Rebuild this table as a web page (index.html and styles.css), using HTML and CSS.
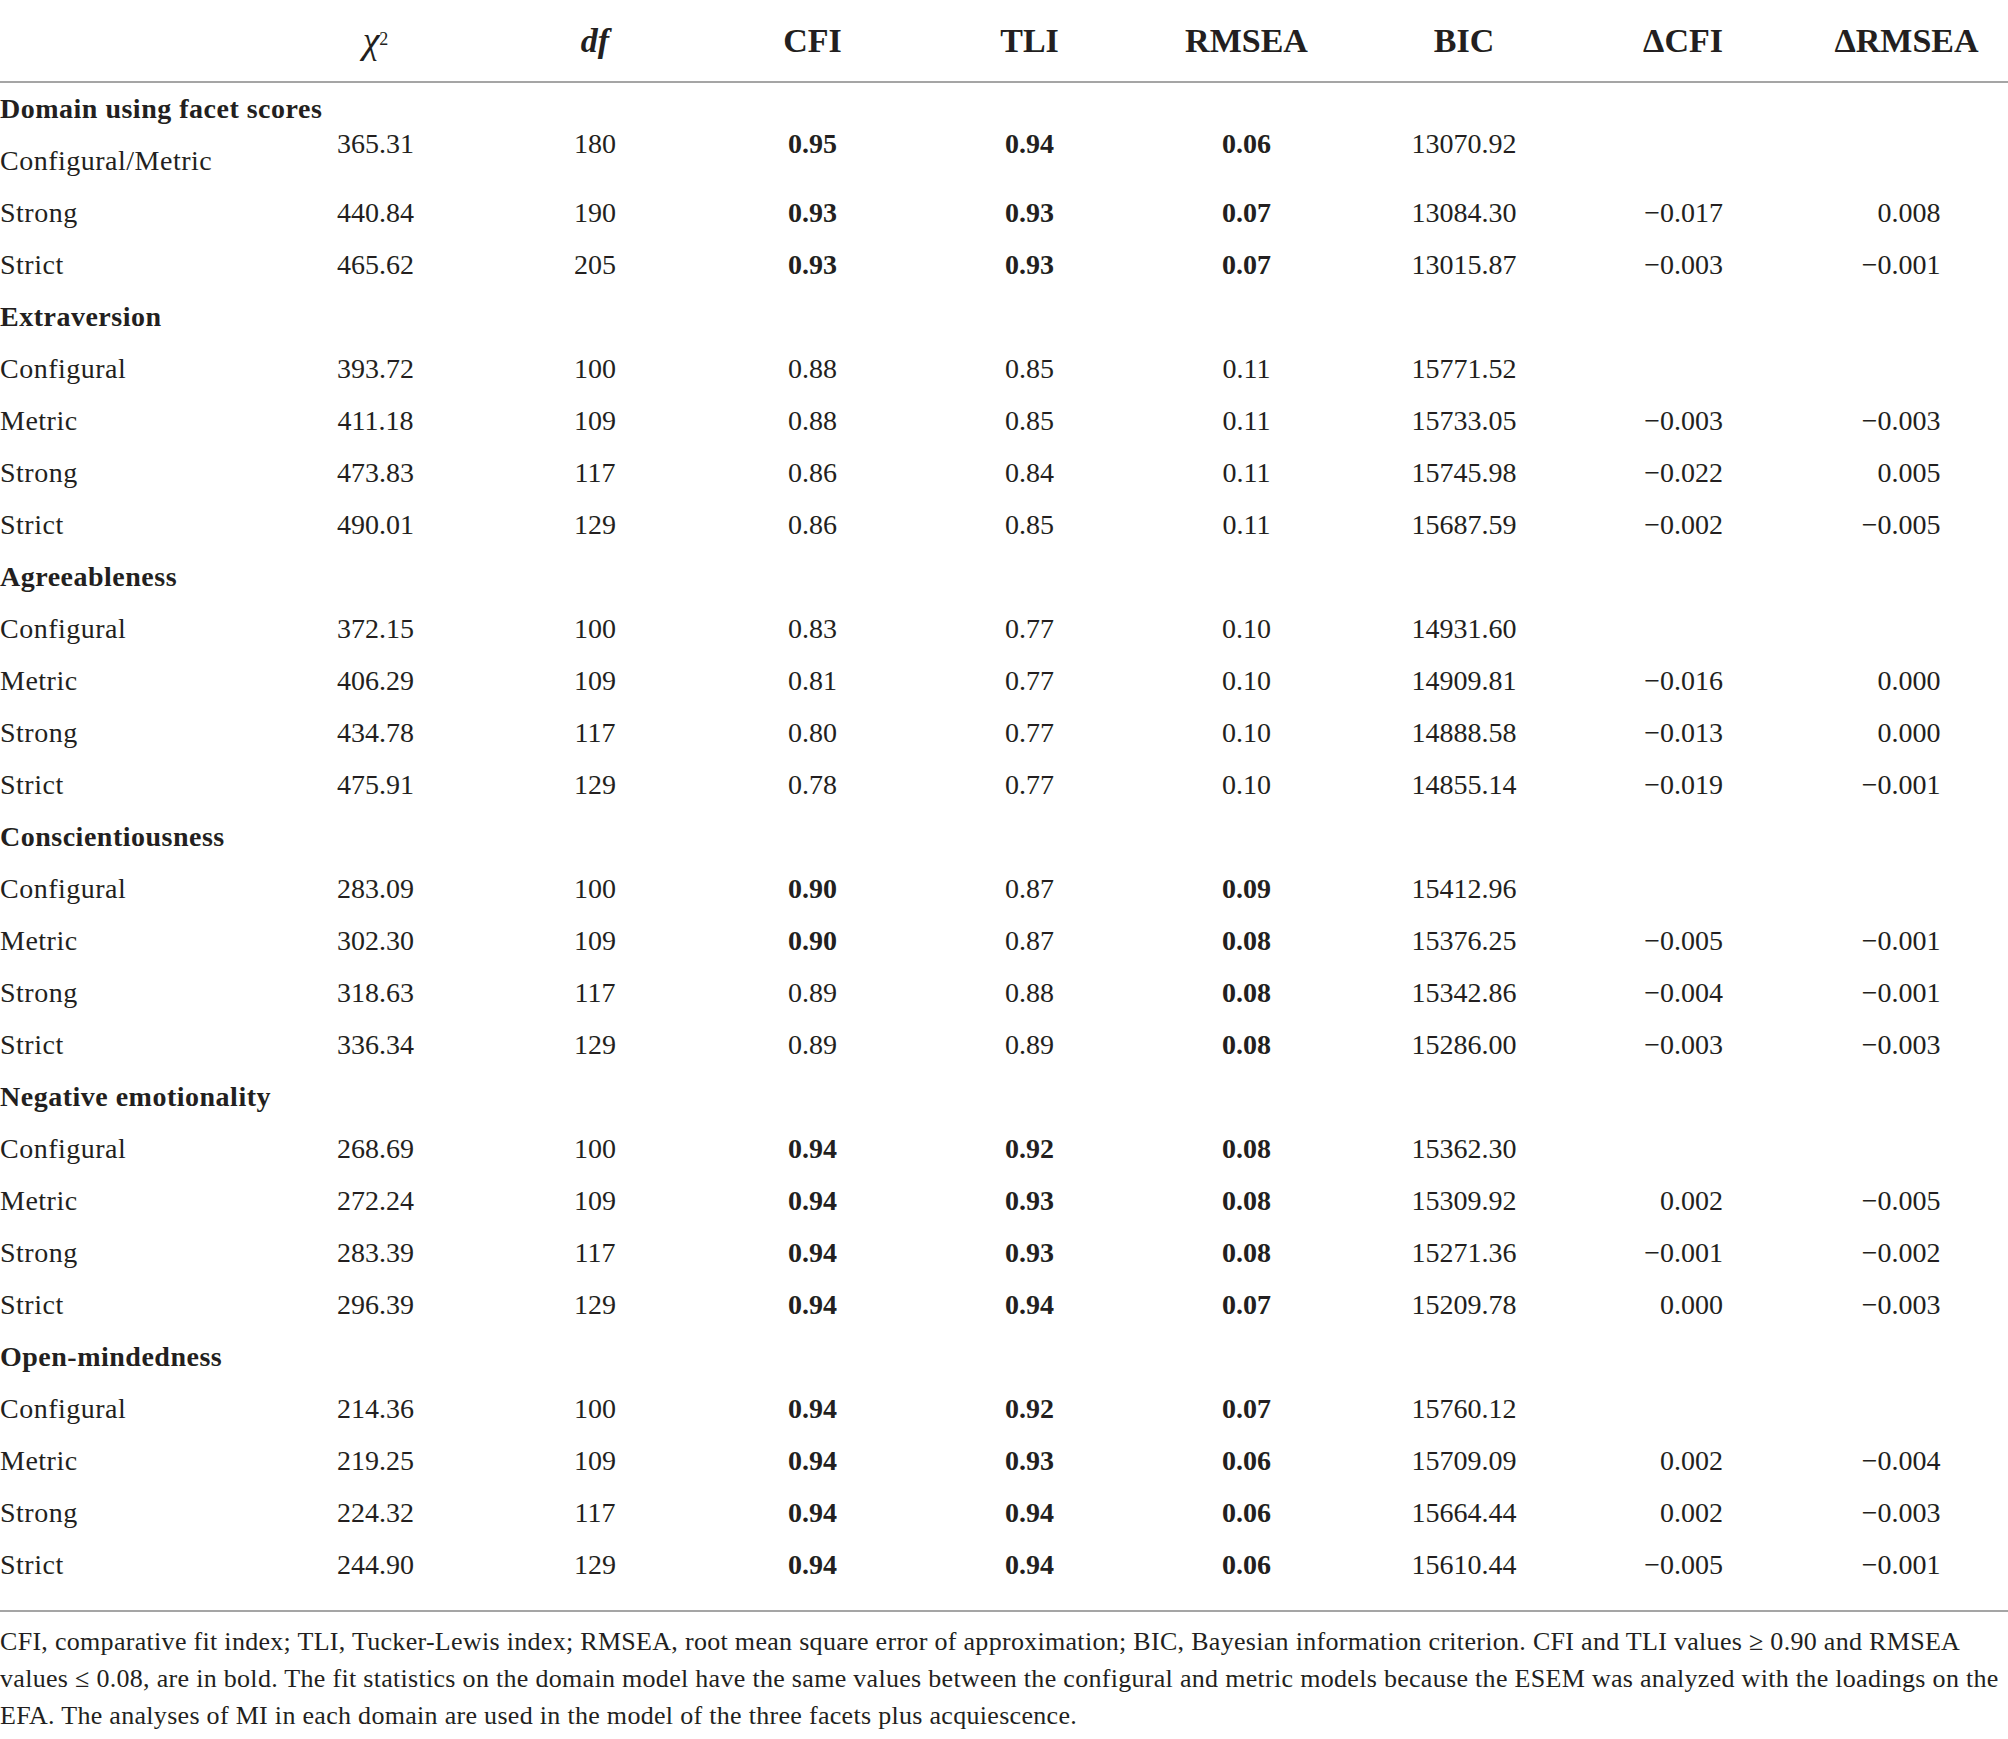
FILE: index.html
```html
<!DOCTYPE html>
<html lang="en">
<head>
<meta charset="utf-8">
<title>Measurement invariance fit statistics</title>
<link rel="stylesheet" href="styles.css">
</head>
<body>
<div class="table-wrap">
<table class="fit-table">
  <colgroup>
    <col class="c-label">
    <col class="c1"><col class="c2"><col class="c3"><col class="c4">
    <col class="c5"><col class="c6"><col class="c7"><col class="c8">
  </colgroup>
  <thead>
    <tr class="head-row">
      <th></th>
      <th><span class="chi">χ</span><sup class="sq">2</sup></th>
      <th><span class="it">df</span></th>
      <th>CFI</th>
      <th>TLI</th>
      <th>RMSEA</th>
      <th>BIC</th>
      <th>ΔCFI</th>
      <th class="last-head">ΔRMSEA</th>
    </tr>
  </thead>
  <tbody>
    <tr class="group"><td class="label" colspan="9">Domain using facet scores</td></tr>
    <tr class="first-data">
      <td class="label">Configural/Metric</td>
      <td class="raised">365.31</td><td class="raised">180</td><td class="raised b">0.95</td><td class="raised b">0.94</td><td class="raised b">0.06</td><td class="raised">13070.92</td><td class="raised"></td><td class="raised"></td>
    </tr>
    <tr><td class="label">Strong</td><td>440.84</td><td>190</td><td class="b">0.93</td><td class="b">0.93</td><td class="b">0.07</td><td>13084.30</td><td class="delta"><span>−0.017</span></td><td class="delta"><span>0.008</span></td></tr>
    <tr><td class="label">Strict</td><td>465.62</td><td>205</td><td class="b">0.93</td><td class="b">0.93</td><td class="b">0.07</td><td>13015.87</td><td class="delta"><span>−0.003</span></td><td class="delta"><span>−0.001</span></td></tr>

    <tr class="group"><td class="label" colspan="9">Extraversion</td></tr>
    <tr><td class="label">Configural</td><td>393.72</td><td>100</td><td>0.88</td><td>0.85</td><td>0.11</td><td>15771.52</td><td></td><td></td></tr>
    <tr><td class="label">Metric</td><td>411.18</td><td>109</td><td>0.88</td><td>0.85</td><td>0.11</td><td>15733.05</td><td class="delta"><span>−0.003</span></td><td class="delta"><span>−0.003</span></td></tr>
    <tr><td class="label">Strong</td><td>473.83</td><td>117</td><td>0.86</td><td>0.84</td><td>0.11</td><td>15745.98</td><td class="delta"><span>−0.022</span></td><td class="delta"><span>0.005</span></td></tr>
    <tr><td class="label">Strict</td><td>490.01</td><td>129</td><td>0.86</td><td>0.85</td><td>0.11</td><td>15687.59</td><td class="delta"><span>−0.002</span></td><td class="delta"><span>−0.005</span></td></tr>

    <tr class="group"><td class="label" colspan="9">Agreeableness</td></tr>
    <tr><td class="label">Configural</td><td>372.15</td><td>100</td><td>0.83</td><td>0.77</td><td>0.10</td><td>14931.60</td><td></td><td></td></tr>
    <tr><td class="label">Metric</td><td>406.29</td><td>109</td><td>0.81</td><td>0.77</td><td>0.10</td><td>14909.81</td><td class="delta"><span>−0.016</span></td><td class="delta"><span>0.000</span></td></tr>
    <tr><td class="label">Strong</td><td>434.78</td><td>117</td><td>0.80</td><td>0.77</td><td>0.10</td><td>14888.58</td><td class="delta"><span>−0.013</span></td><td class="delta"><span>0.000</span></td></tr>
    <tr><td class="label">Strict</td><td>475.91</td><td>129</td><td>0.78</td><td>0.77</td><td>0.10</td><td>14855.14</td><td class="delta"><span>−0.019</span></td><td class="delta"><span>−0.001</span></td></tr>

    <tr class="group"><td class="label" colspan="9">Conscientiousness</td></tr>
    <tr><td class="label">Configural</td><td>283.09</td><td>100</td><td class="b">0.90</td><td>0.87</td><td class="b">0.09</td><td>15412.96</td><td></td><td></td></tr>
    <tr><td class="label">Metric</td><td>302.30</td><td>109</td><td class="b">0.90</td><td>0.87</td><td class="b">0.08</td><td>15376.25</td><td class="delta"><span>−0.005</span></td><td class="delta"><span>−0.001</span></td></tr>
    <tr><td class="label">Strong</td><td>318.63</td><td>117</td><td>0.89</td><td>0.88</td><td class="b">0.08</td><td>15342.86</td><td class="delta"><span>−0.004</span></td><td class="delta"><span>−0.001</span></td></tr>
    <tr><td class="label">Strict</td><td>336.34</td><td>129</td><td>0.89</td><td>0.89</td><td class="b">0.08</td><td>15286.00</td><td class="delta"><span>−0.003</span></td><td class="delta"><span>−0.003</span></td></tr>

    <tr class="group"><td class="label" colspan="9">Negative emotionality</td></tr>
    <tr><td class="label">Configural</td><td>268.69</td><td>100</td><td class="b">0.94</td><td class="b">0.92</td><td class="b">0.08</td><td>15362.30</td><td></td><td></td></tr>
    <tr><td class="label">Metric</td><td>272.24</td><td>109</td><td class="b">0.94</td><td class="b">0.93</td><td class="b">0.08</td><td>15309.92</td><td class="delta"><span>0.002</span></td><td class="delta"><span>−0.005</span></td></tr>
    <tr><td class="label">Strong</td><td>283.39</td><td>117</td><td class="b">0.94</td><td class="b">0.93</td><td class="b">0.08</td><td>15271.36</td><td class="delta"><span>−0.001</span></td><td class="delta"><span>−0.002</span></td></tr>
    <tr><td class="label">Strict</td><td>296.39</td><td>129</td><td class="b">0.94</td><td class="b">0.94</td><td class="b">0.07</td><td>15209.78</td><td class="delta"><span>0.000</span></td><td class="delta"><span>−0.003</span></td></tr>

    <tr class="group"><td class="label" colspan="9">Open-mindedness</td></tr>
    <tr><td class="label">Configural</td><td>214.36</td><td>100</td><td class="b">0.94</td><td class="b">0.92</td><td class="b">0.07</td><td>15760.12</td><td></td><td></td></tr>
    <tr><td class="label">Metric</td><td>219.25</td><td>109</td><td class="b">0.94</td><td class="b">0.93</td><td class="b">0.06</td><td>15709.09</td><td class="delta"><span>0.002</span></td><td class="delta"><span>−0.004</span></td></tr>
    <tr><td class="label">Strong</td><td>224.32</td><td>117</td><td class="b">0.94</td><td class="b">0.94</td><td class="b">0.06</td><td>15664.44</td><td class="delta"><span>0.002</span></td><td class="delta"><span>−0.003</span></td></tr>
    <tr><td class="label">Strict</td><td>244.90</td><td>129</td><td class="b">0.94</td><td class="b">0.94</td><td class="b">0.06</td><td>15610.44</td><td class="delta"><span>−0.005</span></td><td class="delta"><span>−0.001</span></td></tr>
  </tbody>
</table>
</div>
<p class="note">CFI, comparative fit index; TLI, Tucker-Lewis index; RMSEA, root mean square error of approximation; BIC, Bayesian information criterion. CFI and TLI values ≥ 0.90 and RMSEA<br>values ≤ 0.08, are in bold. The fit statistics on the domain model have the same values between the configural and metric models because the ESEM was analyzed with the loadings on the<br>EFA. The analyses of MI in each domain are used in the model of the three facets plus acquiescence.</p>
</body>
</html>
```

FILE: styles.css
```css
html, body {
  margin: 0;
  padding: 0;
  background: #ffffff;
}

body {
  font-family: "Liberation Serif", "Times New Roman", serif;
  color: #231f20;
  width: 2008px;
}

.table-wrap {
  padding-bottom: 19px;
  border-bottom: 2px solid #a5a5a5;
}

.fit-table {
  width: 2008px;
  border-collapse: separate;
  border-spacing: 0;
  table-layout: fixed;
}

.c-label { width: 265px; }
.c1 { width: 221px; }
.c2 { width: 218px; }
.c3 { width: 217px; }
.c4 { width: 217px; }
.c5 { width: 217px; }
.c6 { width: 218px; }
.c7 { width: 220px; }
.c8 { width: 215px; }

.head-row {
  height: 83px;
}

.head-row th {
  padding: 0;
  font-size: 34px;
  font-weight: bold;
  text-align: center;
  vertical-align: middle;
  border-bottom: 2px solid #a5a5a5;
  line-height: 40px;
}

.head-row th.last-head {
  padding-left: 12px;
}

.chi {
  font-style: italic;
  font-weight: normal;
  font-size: 38px;
}

.sq {
  font-size: 18px;
  font-weight: normal;
  vertical-align: top;
  position: relative;
  top: -1px;
  margin-left: 0;
}

.it {
  font-style: italic;
}

.fit-table tbody tr {
  height: 52px;
}

.fit-table td {
  padding: 0;
  font-size: 28px;
  line-height: 32px;
  text-align: center;
  vertical-align: middle;
  white-space: nowrap;
}

.fit-table td.label {
  text-align: left;
  letter-spacing: 0.5px;
}

.group td {
  font-weight: bold;
}

.fit-table td.b {
  font-weight: bold;
}

.fit-table td.raised {
  vertical-align: top;
  line-height: 18px;
}

.delta span {
  display: inline-block;
  width: 80px;
  text-align: right;
}

.note {
  margin: 0;
  padding-top: 11px;
  font-size: 26px;
  letter-spacing: 0.3px;
  line-height: 37px;
  white-space: nowrap;
}
```
